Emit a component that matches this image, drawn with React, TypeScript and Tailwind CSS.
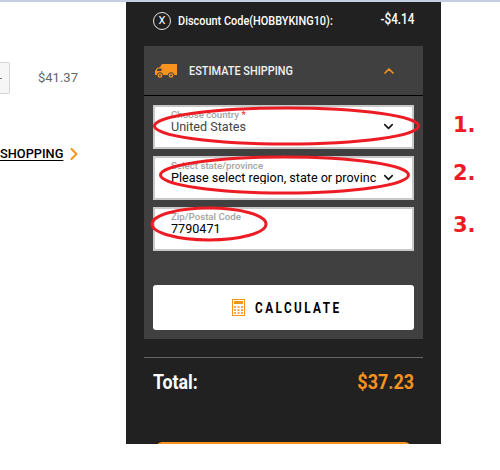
import { ChevronDown, ChevronRight, ChevronUp } from 'lucide-react'

function TruckIcon() {
  return (
    <svg width="22" height="16" viewBox="0 0 22 16" className="shrink-0">
      <path d="M7 1h15v11H0V8l2-3 3-1 2-3z" fill="#f7931e" />
      <path d="M3 5.500h3.500V8H1.800z" fill="#404040" />
      <circle cx="5" cy="12.500" r="2.800" fill="#f7931e" stroke="#404040" strokeWidth="1" />
      <circle cx="16" cy="12.500" r="2.800" fill="#f7931e" stroke="#404040" strokeWidth="1" />
      <circle cx="5" cy="12.500" r="0.900" fill="#404040" />
      <circle cx="16" cy="12.500" r="0.900" fill="#404040" />
    </svg>
  )
}

function CalcIcon() {
  return (
    <svg width="13" height="17" viewBox="0 0 13 17" className="shrink-0">
      <rect x="0" y="0" width="13" height="17" fill="#f7931e" />
      <rect x="1" y="1" width="11" height="15" fill="#fff" />
      <rect x="2" y="2" width="9" height="3" fill="#f7931e" />
      <path d="M2 7h2v2H2zM5.500 7h2v2h-2zM9 7h2v2H9zM2 10h2v2H2zM5.500 10h2v2h-2zM9 10h2v2H9zM2 13h2v2H2zM5.500 13h2v2h-2zM9 13h2v2H9z" fill="#f9a64f" />
    </svg>
  )
}

function Field({ label, value, required, select, dark }: { label: string; value: string; required?: boolean; select?: boolean; dark?: boolean }) {
  return (
    <div className="relative h-[44px] bg-white border-2 border-[#c9c9c9] px-[16px] pt-[3px]">
      <div className="text-[9.7px] leading-[10px] font-medium text-[#a3a3a3]">
        {label}
        {required && <span className="text-[#ee2a2a]"> *</span>}
      </div>
      <div className={`text-[12.6px] leading-[13px] whitespace-nowrap overflow-hidden w-[207px] ${dark ? 'text-black' : 'text-[#444]'}`}>
        {value}
      </div>
      {select && (
        <ChevronDown size={15} strokeWidth={2.5} className="absolute right-[16px] top-[12px] text-[#111]" />
      )}
    </div>
  )
}

export default function App() {
  return (
    <div className="relative w-[500px] h-[470px] overflow-hidden bg-white font-['Roboto',sans-serif]">
      <div className="h-[2px] bg-[#c5cfe0]" />
      <div className="flex items-start">
        <div className="w-[126px] shrink-0">
          <div className="flex items-center h-[32px] mt-[60px]">
            <div className="w-[10px] h-[32px] bg-[#f6f6f6] border border-l-0 border-[#d5d5d5] rounded-r-[2px] flex items-center">
              <span className="w-[2px] h-[1px] bg-[#777]" />
            </div>
            <span className="ml-[28px] text-[13px] text-[#666]">$41.37</span>
          </div>
          <div className="flex items-center mt-[51px] h-[18px]">
            <span className="text-[12.8px] font-medium text-black underline underline-offset-2">SHOPPING</span>
            <ChevronRight size={20} strokeWidth={2.500} className="ml-[1px] text-[#f7931e]" />
          </div>
        </div>

        <div className="w-[315px] h-[442px] bg-[#212121] shrink-0 px-[18px] overflow-hidden">
          <div className="h-[44px] flex items-start justify-between px-[9px] pt-[9px]">
            <div className="flex items-center">
              <span className="w-[18px] h-[18px] rounded-full border border-[#e5e5e5] flex items-center justify-center text-[11px] text-white">X</span>
              <span className="ml-[7px] inline-block origin-left scale-x-[0.84] text-[13px] leading-[20px] font-medium text-white whitespace-nowrap">Discount Code(HOBBYKING10):</span>
            </div>
            <span className="inline-block origin-right scale-x-[0.84] text-[14px] leading-[16px] font-medium text-white">-$4.14</span>
          </div>

          <div className="h-[293px] bg-[#404040]">
            <div className="h-[50px] border-b border-black flex items-center pl-[11px] pr-[26px]">
              <TruckIcon />
              <span className="ml-[12px] inline-block origin-left scale-x-[0.84] text-[13px] font-medium text-[#f2f2f2] whitespace-nowrap">ESTIMATE SHIPPING</span>
              <ChevronUp size={16} strokeWidth={2.500} className="ml-auto text-[#f7931e]" />
            </div>
            <div className="px-[9px] pt-[9px]">
              <div className="flex flex-col gap-[7px]">
                <Field label="Choose country" value="United States" required select />
                <Field label="Select state/province" value="Please select region, state or provinc" select dark />
                <Field label="Zip/Postal Code" value="7790471" dark />
              </div>
              <button className="mt-[34px] w-full h-[45px] bg-white rounded-[3px] flex items-center justify-start pl-[79px]">
                <CalcIcon />
                <span className="ml-[10px] mt-[1px] inline-block origin-left scale-x-[0.84] text-[14px] leading-none font-bold text-black tracking-[2.900px] whitespace-nowrap">CALCULATE</span>
              </button>
            </div>
          </div>

          <div className="mt-[18px] border-t border-[#666] pt-[14px] px-[9px] flex items-center justify-between">
            <span className="inline-block origin-left scale-x-[0.89] text-[20px] leading-[20px] font-bold text-white">Total:</span>
            <span className="inline-block origin-right scale-x-[0.9] text-[20px] leading-[20px] font-bold text-[#f7931e]">$37.23</span>
          </div>

          <div className="mt-[50px] mx-[12px] h-[20px] bg-[#f7931e] rounded-t-[6px]" />
        </div>

        <div className="flex-1 pl-[12px] pt-[110px] flex flex-col text-[21px] leading-[26px] font-bold text-[#ed1c24] font-['DejaVu_Sans',sans-serif]">
          <span>1.</span>
          <span className="mt-[22px]">2.</span>
          <span className="mt-[26px]">3.</span>
        </div>
      </div>

      <svg width="500" height="470" className="absolute inset-0 pointer-events-none" fill="none" stroke="#ed1c24" strokeWidth="3">
        <ellipse cx="286.500" cy="126" rx="132" ry="18" />
        <ellipse cx="284.500" cy="175" rx="124" ry="18" />
        <ellipse cx="209" cy="224" rx="57" ry="16" />
      </svg>
    </div>
  )
}
